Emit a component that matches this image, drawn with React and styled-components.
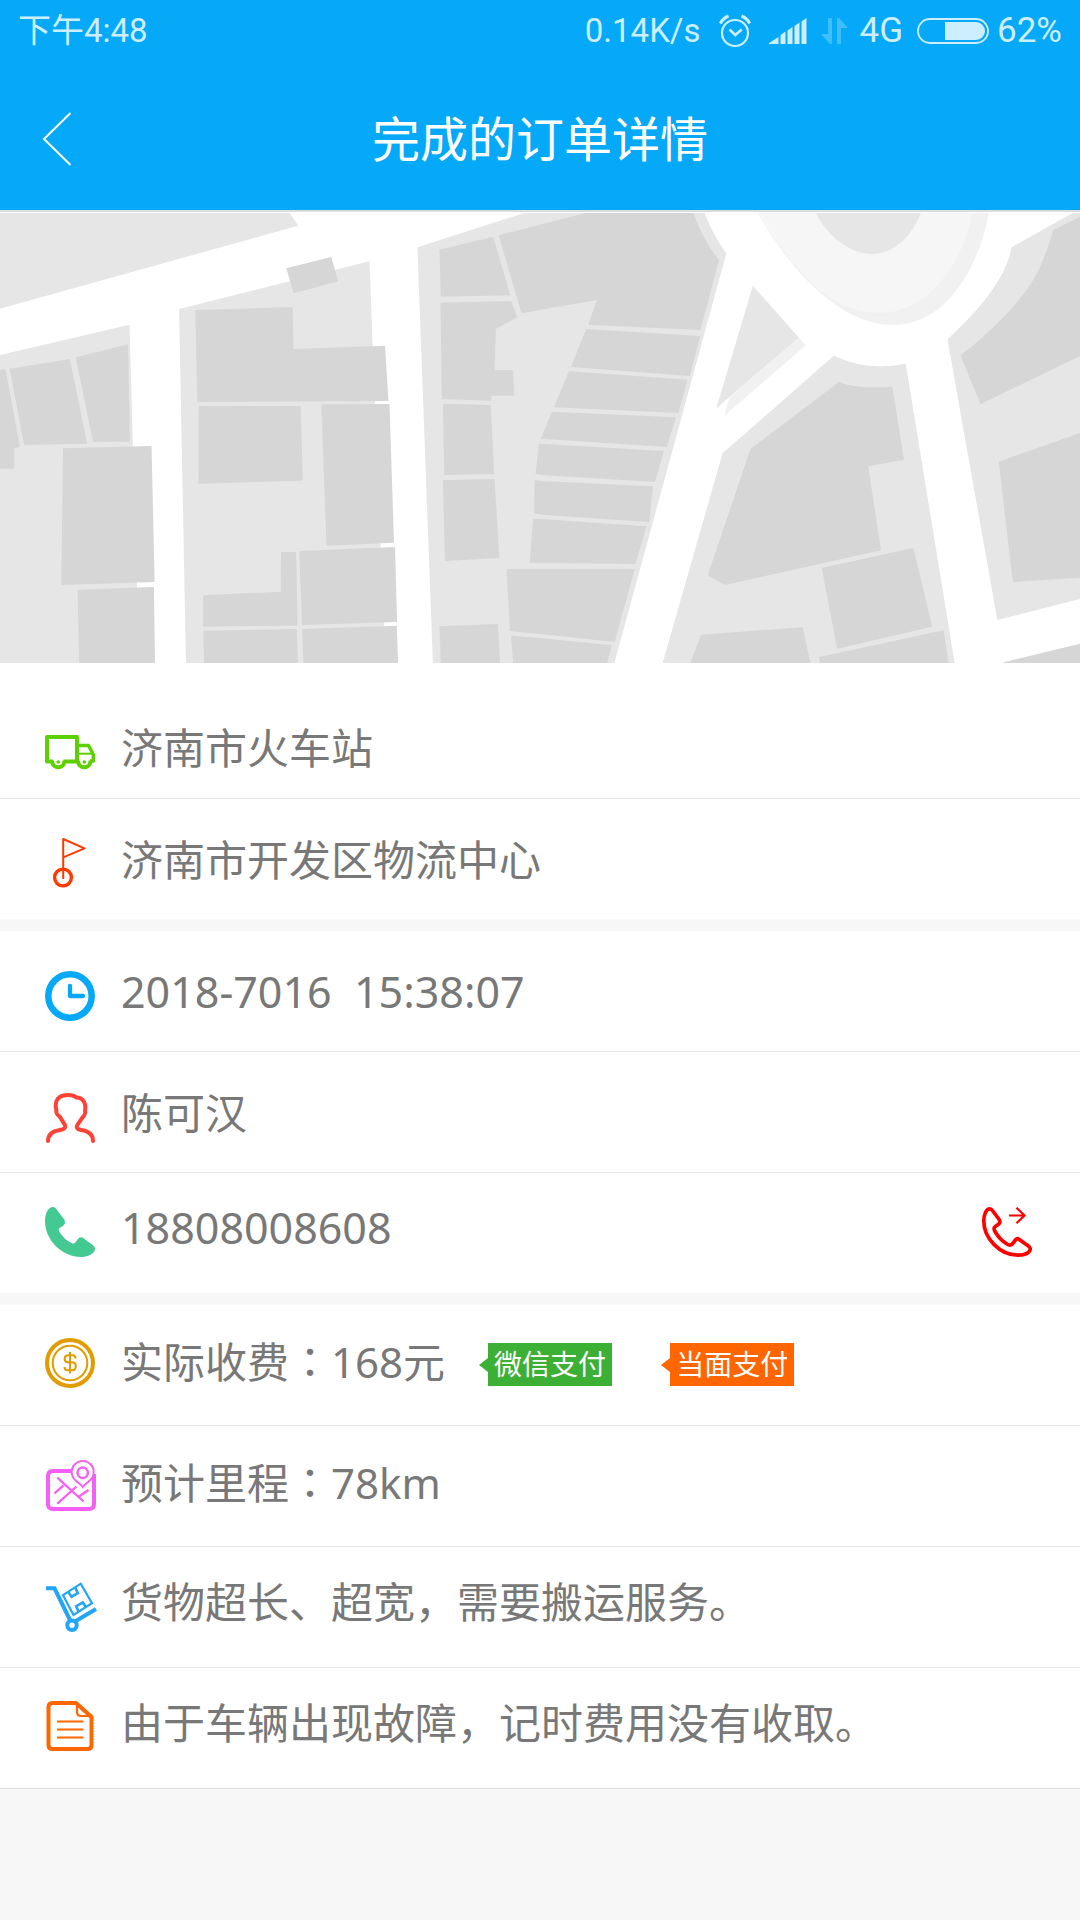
import React from "react";
import styled, { createGlobalStyle } from "styled-components";

const GlobalStyle = createGlobalStyle`
  * {
    box-sizing: border-box;
  }
  html {
    background: #f7f7f7;
  }
  body {
    margin: 0;
    background: #f7f7f7;
    color: #787878;
    font-family: "Noto Sans", "Noto Sans CJK SC", sans-serif;
    font-size: 42px;
  }
`;

const Header = styled.header`
  background: #05a9f7;
  border-bottom: 2px solid #dcdcdc;
  color: #fff;
`;

const StatusBar = styled.div`
  display: flex;
  align-items: center;
  justify-content: space-between;
  height: 62px;
  padding: 0 18px;
  color: #cdeefe;
  font-family: Roboto, "Noto Sans CJK SC", sans-serif;
  font-size: 33px;
  line-height: 40px;
`;

const StatusGroup = styled.div`
  display: flex;
  align-items: center;
`;

const StatusItem = styled.span`
  display: flex;
  margin-left: ${props => props.$gap}px;
  font-size: 35px;
`;

const NavBar = styled.div`
  display: grid;
  grid-template-columns: 120px 1fr 120px;
  align-items: center;
  height: 148px;
  padding-top: 6px;
`;

const BackButton = styled.button`
  display: flex;
  padding: 20px 42px;
  border: 0;
  background: none;
  color: inherit;
`;

const Title = styled.h1`
  margin: 0;
  font-size: 48px;
  font-weight: 400;
  line-height: 64px;
  text-align: center;
`;

const MapView = styled.svg`
  display: block;
  width: 100%;
  height: auto;
  border-top: 1px solid #fff;
  background: #fff;
`;

const Section = styled.section`
  background: #fff;
  border-bottom: ${props => (props.$last ? "1px solid #dcdcdc" : "12px solid #f7f7f7")};
`;

const rowPadding = {
  first: "64px 48px 21px 45px",
  low: "40px 48px 30px 45px",
  normal: "34px 48px 36px 45px"
};

const Row = styled.div`
  display: flex;
  gap: 26px;
  padding: ${props => rowPadding[props.$place || "normal"]};

  & + & {
    border-top: 1px solid #e6e6e6;
  }
`;

const RowIcon = styled.svg`
  flex: none;
  width: 50px;
  height: 50px;
  overflow: visible;
  fill: none;
  stroke: currentColor;
  color: ${props => props.$color};
`;

const RowText = styled.p`
  margin: 0;
  font-size: ${props => (props.$digits ? 43 : 42)}px;
  line-height: 42px;
  white-space: pre-wrap;
`;

/* the JP face keeps the full-width colon in the middle of its cell */
const Colon = styled.span`
  font-family: "Noto Sans CJK JP", sans-serif;
`;

const Tags = styled.div`
  display: flex;
  align-items: flex-start;
  gap: 58px;
  padding: 4px 0 0 17px;
`;

const Tag = styled.span`
  position: relative;
  height: 43px;
  padding: 0 6px;
  background: ${props => props.$color};
  color: #fff;
  font-size: 28px;
  line-height: 43px;

  &::before {
    content: "";
    position: absolute;
    top: 15px;
    left: -9px;
    border: solid transparent;
    border-width: 7px 9px 7px 0;
    border-right-color: ${props => props.$color};
  }
`;

const CallButton = styled.button`
  display: flex;
  height: 50px;
  margin-left: auto;
  padding: 0;
  border: 0;
  background: none;
`;

const AlarmIcon = () => (
  <svg width="32" height="34" viewBox="0 0 32 34" fill="none" stroke="currentColor">
    <circle cx="16" cy="19" r="13" strokeWidth="2.2" />
    <path d="M10.5 15.5l5.8 5.4 6.4-5.4" strokeWidth="2.6" />
    <path d="M1.3 9.5C3 6 5.5 3.5 9.5 2M30.7 9.5C29 6 26.5 3.5 22.5 2" strokeWidth="3" />
  </svg>
);

const SignalIcon = () => (
  <svg width="38" height="26" viewBox="0 0 38 26" fill="currentColor">
    <path d="M0 26v-1l9.5-6v7zM11.5 26V17l5-3.5V26zM18.5 26V12.5l5-3.5V26zM25.5 26V8l5-3.5V26zM32.5 26V3.5l5-3.5V26z" />
  </svg>
);

const TransferIcon = () => (
  <svg width="27" height="26" viewBox="0 0 27 26" fill="#3fbefa">
    <path d="M7 0h4v26H9L0 16h7zM16 0h2l9 10h-7v16h-4z" />
  </svg>
);

const BatteryIcon = () => (
  <svg width="72" height="26" viewBox="0 0 72 26" fill="none">
    <rect x="1" y="1" width="70" height="24" rx="12" stroke="currentColor" strokeWidth="1.8" />
    <path d="M28 4h31a9 9 0 0 1 0 18H28z" fill="currentColor" />
  </svg>
);

const BackIcon = () => (
  <svg width="30" height="54" viewBox="0 0 30 54" fill="none" stroke="currentColor" strokeWidth="2">
    <path d="M28.5 1L2 27l26.5 26" />
  </svg>
);

const TruckIcon = () => (
  <RowIcon $color="#5dd000" viewBox="0 0 50 50">
    <path d="M8 34.5H2V10h30v24.5H18.5" strokeWidth="4" strokeLinejoin="round" />
    <path d="M32 18.5h11.5l4.8 9V34H45" strokeWidth="3.5" strokeLinejoin="round" />
    <path d="M34 26.7h14" strokeWidth="2" />
    <path d="M7 33.5c0 9 12.5 9 12.5 0M33 33.5c0 9 12.5 9 12.5 0" strokeWidth="4" />
    <circle cx="13.2" cy="35" r="1.8" fill="currentColor" stroke="none" />
    <circle cx="39.3" cy="35" r="1.8" fill="currentColor" stroke="none" />
  </RowIcon>
);

const FlagIcon = () => (
  <RowIcon $color="#ff3a00" viewBox="0 1 50 50">
    <path d="M18.2 41V1l21.3 9.3-21.3 9" strokeWidth="2" strokeLinejoin="round" />
    <circle cx="18" cy="39.5" r="8.4" strokeWidth="3.4" />
  </RowIcon>
);

const ClockIcon = () => (
  <RowIcon $color="#05a9f7" viewBox="0 0 50 50">
    <circle cx="25" cy="25" r="21.7" strokeWidth="6.5" />
    <path d="M25 15v10h13" strokeWidth="4.3" strokeLinecap="round" strokeLinejoin="round" />
  </RowIcon>
);

const PersonIcon = () => (
  <RowIcon $color="#ff4136" viewBox="-1 -1 50 50">
    <path
      d="M2 48c0-7 5-10 12-11 5-.7 6.5-3.2 4-6.5-2-2.5-2.5-5-4.5-7-2.5-2-4-3.5-3-5.5C7.500 6.500 13 2 22.500 2c4 0 6 .7 8 2.500 6.500 0 10 6 8.500 13.500 1 2-.5 4-2 6-2 2-3 4.500-5 7-2.500 3.200-1 5.500 3 6 7.500 1 12 4 12 11"
      strokeWidth="4"
      strokeLinecap="round"
      strokeLinejoin="round"
    />
  </RowIcon>
);

const PhoneIcon = () => (
  <RowIcon $color="#45c993" viewBox="0 0 50 50">
    <path
      d="M0 14C0 6 3.5 0 8 0c1.8 0 2.8 1 4 3l6.5 8.5c2 2.5 2 5 0 7L14.5 21c-1 1-1 2 0 4 3 5 7.5 9 12.5 11.3 1.5.7 2.5.2 3.5-1l3-4c1.5-1.5 3.5-1.5 5 0l9.5 7c2.5 2 2.5 4.5 1 6.5C46 48.500 41 50 36 50 17 50 0 33 0 14z"
      fill="currentColor"
      stroke="none"
    />
  </RowIcon>
);

const CallIcon = () => (
  <RowIcon $color="#ff0000" viewBox="0 0 50 50">
    <path
      d="M1.8 14C1.8 7 4.5 1.8 7.8 1.8c1.2 0 2 .8 3 2.2l6 8c1.5 2 1.5 3.5 0 5l-3.5 2.5c-1.5 1-1.5 3 0 5.5 3 5.2 7.5 9.5 12 12.3 2 1.2 4 .9 5.500-1l3-3.800c1-1.200 2.200-1.200 3.500 0l9 6.500c2.200 1.500 2.500 3.500 1 5.500-2.500 2.800-6.500 3.700-11.500 3.700C18 48.200 1.800 31.500 1.800 14z"
      strokeWidth="3.7"
    />
    <path d="M27 8.5h15.5M34.5.8l8 7.7-8 7.7" strokeWidth="2.2" />
  </RowIcon>
);

const CoinIcon = () => (
  <RowIcon $color="#e09c00" viewBox="0 1 50 50">
    <circle cx="25" cy="25" r="23" strokeWidth="4" />
    <circle cx="25" cy="25" r="17.3" strokeWidth="2" />
    <path
      d="M25 14v21.5M30.5 20.5c0-2-1.5-3.2-3.5-3.2h-4c-4.5 0-4.5 7 0 7h4c5 0 5 8 0 8h-4c-2.2 0-3.5-1.3-3.5-3.3"
      strokeWidth="2"
    />
  </RowIcon>
);

const MapIcon = () => (
  <RowIcon $color="#f65ff6" viewBox="-1 -1 50 50">
    <path d="M25 10H7q-5 0-5 5v28q0 5 5 5h36q5 0 5-5V13" strokeWidth="4" />
    <path
      d="M36.7 26c-2-3-4.5-4-7-6.5a11 11 0 1 1 14 0c-2.5 2.5-5 3.5-7 6.5z"
      fill="#fff"
      strokeWidth="2"
    />
    <circle cx="36.7" cy="11.7" r="5.2" strokeWidth="2.5" />
    <path
      d="M11.3 16.7L37.5 40.5M8.5 32.3l9-8M11.3 42.7L30.5 25.5M33 35.5l9.5-6.5"
      strokeWidth="2.3"
    />
  </RowIcon>
);

const TrolleyIcon = () => (
  <RowIcon $color="#22a4f7" viewBox="-1 -1 50 50">
    <path d="M0 6.3h8.5L24 38M29 39.5l21-12.5" strokeWidth="4" />
    <circle cx="26" cy="43.3" r="4.7" strokeWidth="4" />
    <path d="M17 13.2L34.7 1.7 46 21.2 27.5 33z" strokeWidth="2.2" />
    <path d="M22.3 10l3.3 4.7 6.2-3.5-2.5-5.5M32.5 29.5l-2.3-5.3 6.5-3.7 3.3 4.5" strokeWidth="2.6" />
  </RowIcon>
);

const NoteIcon = () => (
  <RowIcon $color="#ff6600" viewBox="0 1 50 50">
    <path d="M31 2H7.5q-4 0-4 4v38q0 4 4 4h35q4 0 4-4V16z" strokeWidth="4" />
    <path d="M32 2v9q0 4 4 4H46" strokeWidth="2.2" />
    <path d="M12 20.5h26.5M12 28.5h26.5M12 36.5h26.5" strokeWidth="2.2" />
  </RowIcon>
);

const StreetMap = () => (
  <MapView viewBox="0 0 1080 450" role="img" aria-label="map">
    <g transform="scale(.34439 .33333) translate(0 -39)">
      <g fill="#e6e6e6">
        <path d="M0 39H841L866 77 0 326z" />
        <path d="M0 465L376 374 386 740 398 1140V1389H0z" />
        <path d="M520 327L1073 184 1082 437 1089 605 1105 1040 1115 1270 1120 1389H540z" />
        <path d="M1212 142L1522 39H1568V1389H1257z" />
      </g>
      <g fill="#d6d6d6">
        <path d="M0 510L16 507 58 741 41 745V806H0z" />
        <path d="M28 506L203 477 253 731 70 735z" />
        <path d="M220 472L372 433 377 725H270z" />
        <path d="M183 745L440 738 449 1146 178 1155z" />
        <path d="M225 1169L447 1161 450 1389H230z" />
        <path d="M831 205L962 171 982 244 853 280z" />
        <path d="M567 330L850 321 852 447 1118 437 1128 603 573 606z" />
        <path d="M577 618H873L879 842 576 851z" />
        <path d="M933 613L1131 612 1144 1028 948 1037z" />
        <path d="M816 1056H860L864 1277 590 1280V1186L815 1175z" />
        <path d="M869 1053L1147 1041 1153 1266 877 1275z" />
        <path d="M590 1292L862 1287 865 1389H593z" />
        <path d="M877 1287L1152 1277 1156 1389H881z" />
        <path d="M1276 149L1432 110 1482 286 1280 290z" />
        <path d="M1448 106L1568 74V331L1514 340z" />
        <path d="M1279 308L1484 303 1502 352 1440 387 1436 510H1490L1493 587H1427V602L1283 597z" />
        <path d="M1286 611L1425 615 1435 822 1290 825z" />
        <path d="M1286 840L1436 837 1450 1074 1292 1083z" />
        <path d="M1276 1279L1446 1272 1452 1389H1280z" />
        <path d="M1565 730H1568V823H1555zM1552 841L1568 842V943L1551 941zM1548 956L1568 957V1089H1538z" />
        <path d="M1471 1107H1568V1302L1481 1293zM1484 1307L1568 1314V1389H1490z" />
      </g>
    </g>
    <g transform="translate(540 0) scale(.34439 .33333) translate(0 -39)">
      <g fill="#e6e6e6">
        <path d="M0 39H478Q502 105 541 160L216 1389H0z" />
        <path d="M853 467Q950 515 1062 491L1204 1389H356L530 760z" />
        <path d="M1547 39L1369 142C1355 235 1270 335 1183 418L1328 1260 1568 1197V39z" />
      </g>
      <path d="M752 413L772 436 535 647 550 593z" fill="#f1f1f1" />
      <path d="M618 257L752 413 512 625z" fill="#e6e6e6" />
      <path d="M632 39C720 200 865 375 1025 375 1190 375 1280 180 1303 39z" fill="#f1f1f1" />
      <path d="M632 39C690 140 740 200 810 270 870 320 930 338 990 338 1120 338 1225 200 1256 39z" fill="#f6f6f6" />
      <path d="M801 39C840 120 910 162 963 162 1020 162 1075 120 1106 39z" fill="#e6e6e6" />
      <g fill="#d6d6d6">
        <path d="M0 74L133 39H445Q475 125 520 180L466 390 140 374 165 300 0 330z" />
        <path d="M134 387L465 408 435 528 90 501z" />
        <path d="M84 514L428 539 402 639 41 622z" />
        <path d="M35 635L395 652 368 741 2 716z" />
        <path d="M0 731L360 753 334 846 0 825z" />
        <path d="M0 843L328 859 317 966 0 944z" />
        <path d="M0 957L310 979 277 1092 0 1089z" />
        <path d="M0 1107H275L217 1326 0 1302z" />
        <path d="M0 1314L209 1336 195 1389H0z" />
        <path d="M869 545Q910 567 1023 560L1057 779 953 799 990 1051 537 1155 487 1126 611 747z" />
        <path d="M818 1104L1084 1044 1139 1280 863 1346z" />
        <path d="M467 1304L763 1282 785 1389H437z" />
        <path d="M810 1371L1172 1291 1186 1389H813z" />
        <path d="M1568 50L1491 90C1475 140 1460 190 1440 225 1400 305 1300 405 1221 466L1279 613 1568 468z" />
        <path d="M1332 785L1568 699V1133L1373 1146z" />
        <path d="M1346 1387L1568 1331V1389H1346z" />
      </g>
    </g>
  </MapView>
);

const App = () => (
  <>
    <GlobalStyle />
    <Header>
      <StatusBar>
        <span>下午4:48</span>
        <StatusGroup>
          <span>0.14K/s</span>
          <StatusItem $gap={18}>
            <AlarmIcon />
          </StatusItem>
          <StatusItem $gap={18}>
            <SignalIcon />
          </StatusItem>
          <StatusItem $gap={14}>
            <TransferIcon />
          </StatusItem>
          <StatusItem $gap={12}>4G</StatusItem>
          <StatusItem $gap={14}>
            <BatteryIcon />
          </StatusItem>
          <StatusItem $gap={8}>62%</StatusItem>
        </StatusGroup>
      </StatusBar>
      <NavBar>
        <BackButton aria-label="返回">
          <BackIcon />
        </BackButton>
        <Title>完成的订单详情</Title>
      </NavBar>
    </Header>
    <StreetMap />
    <main>
      <Section>
        <Row $place="first">
          <TruckIcon />
          <RowText>济南市火车站</RowText>
        </Row>
        <Row $place="low">
          <FlagIcon />
          <RowText>济南市开发区物流中心</RowText>
        </Row>
      </Section>
      <Section>
        <Row $place="low">
          <ClockIcon />
          <RowText $digits>{"2018-7016  15:38:07"}</RowText>
        </Row>
        <Row $place="low">
          <PersonIcon />
          <RowText>陈可汉</RowText>
        </Row>
        <Row>
          <PhoneIcon />
          <RowText $digits>18808008608</RowText>
          <CallButton aria-label="拨打电话">
            <CallIcon />
          </CallButton>
        </Row>
      </Section>
      <Section $last>
        <Row>
          <CoinIcon />
          <RowText>
            实际收费<Colon>：</Colon>168元
          </RowText>
          <Tags>
            <Tag $color="#3cb034">微信支付</Tag>
            <Tag $color="#ff6600">当面支付</Tag>
          </Tags>
        </Row>
        <Row>
          <MapIcon />
          <RowText>
            预计里程<Colon>：</Colon>78km
          </RowText>
        </Row>
        <Row>
          <TrolleyIcon />
          <RowText>货物超长、超宽，需要搬运服务。</RowText>
        </Row>
        <Row>
          <NoteIcon />
          <RowText>由于车辆出现故障，记时费用没有收取。</RowText>
        </Row>
      </Section>
    </main>
  </>
);

export default App;
